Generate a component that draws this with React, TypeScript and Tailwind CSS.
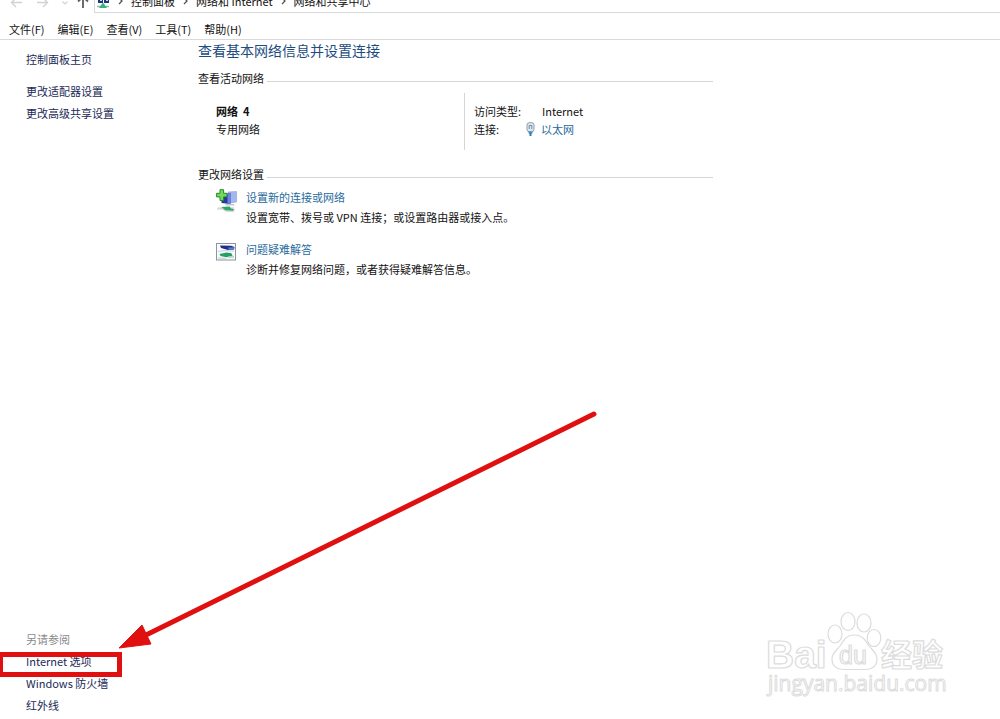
import React from "react";

const menuItems = ["文件(F)", "编辑(E)", "查看(V)", "工具(T)", "帮助(H)"];
const crumbs = ["控制面板", "网络和 Internet", "网络和共享中心"];

function Chevron() {
  return (
    <svg className="h-2 w-[5px]" viewBox="0 0 5 8" fill="none" stroke="#555" strokeWidth="1.3" aria-hidden="true">
      <path d="M1 1l3 3-3 3" />
    </svg>
  );
}

function AddressBar() {
  return (
    <nav aria-label="地址" className="flex h-[13px] items-end overflow-hidden">
      <div className="flex h-[22px] shrink-0 items-center pl-[10px]">
        <button aria-label="后退" className="flex w-[27px]">
          <svg className="h-3 w-3" viewBox="0 0 12 12" fill="none" stroke="#d2d2d2" strokeWidth="1.4">
            <path d="M12 6.5H2M6 2L1.500 6.500 6 11" />
          </svg>
        </button>
        <button aria-label="前进" className="flex w-6">
          <svg className="h-3 w-3" viewBox="0 0 12 12" fill="none" stroke="#d2d2d2" strokeWidth="1.4">
            <path d="M0 6.500H10M6 2L10.500 6.500 6 11" />
          </svg>
        </button>
        <button aria-label="最近的位置" className="flex w-4">
          <svg className="h-2 w-2" viewBox="0 0 8 8" fill="none" stroke="#d8d8d8" strokeWidth="1.3">
            <path d="M1.500 3.500L4 6l2.500-2.500" />
          </svg>
        </button>
        <button aria-label="上移" className="flex w-[17px]">
          <svg className="h-3 w-3" viewBox="0 0 12 12" fill="none" stroke="#5c5c5c" strokeWidth="1.8">
            <path d="M6 12V1M1 5.500L6 1l5 4.500" />
          </svg>
        </button>
      </div>
      <div className="flex h-[22px] grow items-center gap-2 border border-r-0 border-[#d9d9d9] pb-0.5 pl-px">
        <svg className="h-4 w-[14px]" viewBox="0 0 14 16" aria-hidden="true">
          <rect x="2" y="0" width="5" height="10" fill="#22357c" />
          <rect x="8" y="0" width="5" height="10" fill="#22357c" />
          <rect x="4" y="2" width="2" height="6" fill="#c4d8f2" />
          <rect x="10" y="2" width="2" height="6" fill="#c4d8f2" />
          <path d="M1 13.500h12" stroke="#9bb5ac" strokeWidth="1.5" />
          <path d="M7 9.500l4 5.500H3z" fill="#35b37c" />
        </svg>
        <Chevron />
        {crumbs.map((c, i) => (
          <React.Fragment key={c}>
            {i > 0 && <Chevron />}
            <a href="#" className="text-[#111]">{c}</a>
          </React.Fragment>
        ))}
      </div>
    </nav>
  );
}

function SectionTitle({ children }: { children: React.ReactNode }) {
  return (
    <div className="flex items-center gap-[3px]">
      <h2 className="leading-4">{children}</h2>
      <div className="mt-[6px] h-px grow bg-[#d5d5d5]" />
    </div>
  );
}

function PlugIcon() {
  return (
    <svg className="h-[14px] w-[9px]" viewBox="0 0 9 14" aria-hidden="true">
      <rect x="1" y="0.700" width="7" height="9" rx="2.200" fill="#dce7ee" stroke="#86a0b3" />
      <path d="M3.200 7V3.500h2.600V7" fill="none" stroke="#728b9e" />
      <path d="M2.500 9.500h4v2h-4z" fill="#3a8cc4" />
      <path d="M4.500 11v3" stroke="#2b79b4" strokeWidth="2" />
    </svg>
  );
}

function NewConnectionIcon() {
  return (
    <svg className="mt-0.5 h-6 w-[22px] shrink-0" viewBox="0 0 22 24" aria-hidden="true">
      <path d="M12 3l8.500-.5V13l-7 1z" fill="#a3b8ee" stroke="#8b9bd6" strokeWidth="0.600" />
      <path d="M5.500 6l9-2v11l-9-1z" fill="#2b35a4" />
      <path d="M11.500 4.700l3-.7v11l-3-.4z" fill="#6e84de" />
      <path d="M9 15h9l.5 1.500H10z" fill="#c1c6d2" />
      <path d="M4 .7h3.600v3.600H11v3.600H7.600v3.600H4V7.900H.6V4.300H4z" fill="#7ad862" stroke="#238a24" />
      <path d="M1 18.500l6-.8 11 .3 1 4-9 .5z" fill="#dfe4e6" />
      <path d="M5.500 18l8-.6 1.500 2.200 3 .4-1 1.700-8-.4z" fill="#2ba766" />
      <path d="M1 20l6-.3 3 2.300 8 .3" fill="none" stroke="#b4bcc0" strokeWidth="0.800" />
    </svg>
  );
}

function TroubleshootIcon() {
  return (
    <svg className="mt-1 h-[18px] w-[22px] shrink-0" viewBox="0 0 22 18" aria-hidden="true">
      <rect x="0.500" y="0.500" width="19" height="16.500" fill="#f8fafc" stroke="#8e959d" />
      <path d="M4 2.500l11 .2 3.500 1.300-.5 2.500-6 .5-7-2z" fill="#1f2d8c" />
      <path d="M12 4.500l6-.3-.3 2.300-5 .3z" fill="#5f7cc8" />
      <path d="M2 8.500l6-.8 10 .3" fill="none" stroke="#c8d4e0" />
      <path d="M3.500 11l7-1.500 5 .7 1 2.800-6 1.200-6-1.200z" fill="#26a065" />
      <path d="M12 13.500l6-.8v2l-6 .3z" fill="#b5d8c8" />
      <path d="M2 15l8 .3" fill="none" stroke="#c2cdd0" />
    </svg>
  );
}

function Task({ icon, title, text }: { icon: React.ReactNode; title: string; text: string }) {
  return (
    <li className="flex gap-2">
      {icon}
      <div className="leading-5">
        <a href="#" className="text-[#1f6a9c]">{title}</a>
        <p>{text}</p>
      </div>
    </li>
  );
}

function Watermark() {
  return (
    <svg
      className="pointer-events-none absolute right-[50px] bottom-4 h-[96px] w-[186px]"
      viewBox="0 0 186 96"
      fill="#fff"
      stroke="#dcdcdc"
      strokeWidth="1.2"
      strokeLinejoin="round"
      fontFamily="'Liberation Sans', 'Noto Sans CJK SC', sans-serif"
    >
      <text x="2" y="61" fontSize="39" fontWeight="700">Bai</text>
      <ellipse cx="71" cy="27" rx="7" ry="9" />
      <ellipse cx="84" cy="14.500" rx="7" ry="9" />
      <ellipse cx="100" cy="16" rx="7" ry="9" />
      <ellipse cx="110" cy="31" rx="6.800" ry="8.500" />
      <path d="M90 28c9 0 12 6 15 11 4 5 8 7 8 13 0 7-5 10.500-11 10.500H79c-6 0-11-3.500-11-10.500 0-6 4-8 8-13 3-5 6-11 14-11z" />
      <text x="75" y="57" fontSize="25">du</text>
      <text x="117" y="59" fontSize="31" fontWeight="700">经验</text>
      <text x="4" y="84" fontSize="21" strokeWidth="1" fontFamily="'Open Sans', sans-serif">jingyan.baidu.com</text>
    </svg>
  );
}

export default function App() {
  return (
    <div className="relative flex min-h-screen flex-col overflow-hidden bg-white font-['Noto_Sans_CJK_SC',sans-serif] text-[11px] text-[#111]">
      <AddressBar />
      <div role="menubar" className="flex gap-[13px] border-b border-[#d9d9d9] pt-2 pb-0.5 pl-[9px]">
        {menuItems.map((m) => (
          <button key={m} role="menuitem" className="leading-4">{m}</button>
        ))}
      </div>

      <div className="flex grow">
        <aside className="flex w-[198px] shrink-0 flex-col pt-2 pb-[3px] pl-[26px] leading-[22px] text-[#1c2a56]">
          <a href="#">控制面板主页</a>
          <ul className="mt-[10px]">
            <li><a href="#">更改适配器设置</a></li>
            <li><a href="#">更改高级共享设置</a></li>
          </ul>
          <div className="mt-auto">
            <h2 className="text-[#8a8a8a]">另请参阅</h2>
            <ul>
              <li className="relative">
                <a href="#">Internet 选项</a>
                <div className="pointer-events-none absolute top-0.5 -left-[26px] h-[25px] w-[122px] border-[5px] border-l-[3px] border-[#e01010]" />
              </li>
              <li><a href="#">Windows 防火墙</a></li>
              <li><a href="#">红外线</a></li>
            </ul>
          </div>
        </aside>

        <main className="max-w-[515px] grow">
          <h1 className="text-sm leading-5 text-[#1d4c80]">查看基本网络信息并设置连接</h1>

          <section className="mt-[10px]">
            <SectionTitle>查看活动网络</SectionTitle>
            <div className="mt-[7px] flex h-[57px] pl-[18px] leading-[18px]">
              <div className="w-[248px] pt-[9px]">
                <p className="font-bold whitespace-pre">网络  4</p>
                <p>专用网络</p>
              </div>
              <dl className="grid grow grid-cols-[52px_1fr] content-start border-l border-[#d5d5d5] pt-[9px] pl-[9px]">
                <dt>访问类型:</dt>
                <dd className="pl-4">Internet</dd>
                <dt>连接:</dt>
                <dd>
                  <a href="#" className="flex items-center gap-[6px] text-[#1f6a9c]">
                    <PlugIcon />
                    以太网
                  </a>
                </dd>
              </dl>
            </div>
          </section>

          <section className="mt-4">
            <SectionTitle>更改网络设置</SectionTitle>
            <ul className="mt-[5px] flex flex-col gap-3 pl-[18px]">
              <Task
                icon={<NewConnectionIcon />}
                title="设置新的连接或网络"
                text="设置宽带、拨号或 VPN 连接；或设置路由器或接入点。"
              />
              <Task icon={<TroubleshootIcon />} title="问题疑难解答" text="诊断并修复网络问题，或者获得疑难解答信息。" />
            </ul>
          </section>
        </main>
      </div>

      <svg
        className="pointer-events-none absolute bottom-[69px] left-[118px] h-[240px] w-[480px]"
        viewBox="0 0 480 240"
        aria-hidden="true"
      >
        <path d="M476 4L28 225" stroke="#e01010" strokeWidth="5" strokeLinecap="round" />
        <path d="M1 238L24 215 33 234z" fill="#e01010" stroke="#e01010" strokeLinejoin="round" />
      </svg>
      <Watermark />
    </div>
  );
}
